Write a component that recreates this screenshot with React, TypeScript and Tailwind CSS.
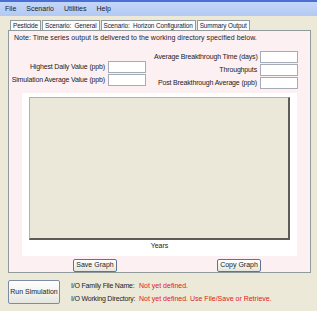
import React from "react";

const font = { fontFamily: '"Liberation Sans", Arial, sans-serif' };

function Field({ label, labelWidth }: { label: string; labelWidth: string }) {
  return (
    <div className="flex items-center h-[12px]">
      <span className={`${labelWidth} text-right pr-[3px] whitespace-nowrap tracking-[-0.15px]`}>{label}</span>
      <div className="w-[38px] h-[12px] bg-white border border-[#a5acb5]" />
    </div>
  );
}

function Tab({ label, active }: { label: string; active?: boolean }) {
  return active ? (
    <div className="h-[13px] px-[3px] flex items-center bg-[#fdf3f5] border border-b-0 border-[#919b9c] rounded-t-[2px] -mb-px relative z-10 whitespace-pre">
      {label}
    </div>
  ) : (
    <div className="h-[10px] px-[2px] flex items-center bg-[#fcfcfe] border border-b-0 border-[#919b9c] mr-px whitespace-pre">
      {label}
    </div>
  );
}

function Btn({ label, className }: { label: string; className?: string }) {
  return (
    <div
      className={`flex items-center justify-center bg-gradient-to-b from-white to-[#e6e6e0] border border-[#5f7397] rounded-[2px] ${className ?? ""}`}
    >
      {label}
    </div>
  );
}

export default function App() {
  return (
    <div
      className="w-[317px] h-[311px] bg-[#ece9d8] flex flex-col text-[7px] text-[#222] overflow-hidden"
      style={font}
    >
      <div className="h-[16px] shrink-0 border-t-2 border-[#4a6fd4] bg-gradient-to-b from-[#c4d6f8] to-[#b3c9f3] flex items-center pl-[5px] gap-[10px]">
        <span>File</span>
        <span>Scenario</span>
        <span>Utilities</span>
        <span>Help</span>
      </div>

      <div className="flex items-end pl-[10px] mt-[2px] h-[12px] text-[6.4px] tracking-[-0.1px]">
        <Tab label="Pesticide" />
        <Tab label="Scenario:  General" />
        <Tab label="Scenario:  Horizon Configuration" />
        <Tab label="Summary Output" />
      </div>

      <div className="ml-[8px] w-[303px] h-[243px] bg-[#fdf0f3] border border-[#919b9c] flex flex-col">
        <div className="pl-[5px] pt-[2px] h-[12px] leading-[10px] tracking-[0.05px]">
          Note:  Time series output is delivered to the working directory specified below.
        </div>

        <div className="flex mt-[8px] h-[42px]">
          <div className="flex flex-col gap-px mt-[10px]">
            <Field label="Highest Daily Value (ppb)" labelWidth="w-[99px]" />
            <Field label="Simulation Average Value (ppb)" labelWidth="w-[99px]" />
          </div>
          <div className="flex flex-col gap-px ml-[8px]">
            <Field label="Average Breakthrough Time (days)" labelWidth="w-[106px]" />
            <Field label="Throughputs" labelWidth="w-[106px]" />
            <Field label="Post Breakthrough Average (ppb)" labelWidth="w-[106px]" />
          </div>
        </div>

        <div className="mx-[13px] h-[163px] bg-white flex flex-col items-center pt-[4px]">
          <div className="w-[261px] h-[143px] bg-[#ebe8d9] border-l border-t border-[#b5b2a6] border-r-2 border-b-2 border-r-[#5c5c55] border-b-[#5c5c55]" />
          <div className="mt-[1px]">Years</div>
        </div>

        <div className="flex mt-[3px]">
          <Btn label="Save Graph" className="ml-[64px] w-[44px] h-[13px]" />
          <Btn label="Copy Graph" className="ml-[100px] w-[44px] h-[13px]" />
        </div>
      </div>

      <div className="flex mt-[7px] pl-[8px]">
        <Btn label="Run Simulation" className="w-[52px] h-[24px] border-[#7b8ba8]" />
        <div className="ml-[11px] flex flex-col gap-[2px] pt-[1px] whitespace-nowrap">
          <div className="flex">
            <span className="w-[68px] tracking-[-0.2px]">I/O Family File Name:</span>
            <span className="text-[#e02020]">Not yet defined.</span>
          </div>
          <div className="flex">
            <span className="w-[68px] tracking-[-0.2px]">I/O Working Directory:</span>
            <span className="text-[#e02020]">Not yet defined. Use File/Save or Retrieve.</span>
          </div>
        </div>
      </div>
    </div>
  );
}
